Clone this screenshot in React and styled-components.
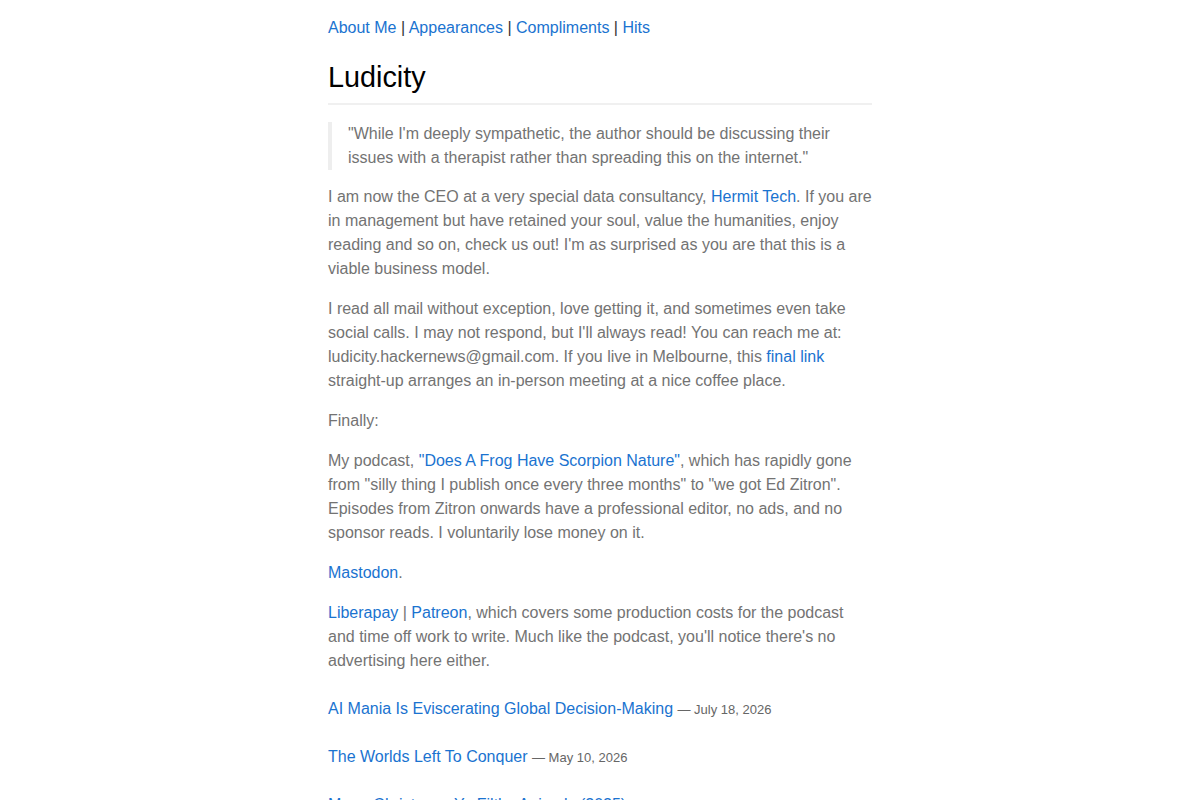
import React from "react";
import styled, { createGlobalStyle } from "styled-components";

const Global = createGlobalStyle`
  html, body { margin: 0; padding: 0; background: #fff; }
  body {
    font-family: "Liberation Sans", Arial, sans-serif;
    font-size: 16px;
    line-height: 24px;
    color: #737373;
  }
`;

const Page = styled.main`
  width: 544px;
  margin: 0 auto;
  padding-top: 16px;
`;

const Link = styled.a`
  color: #1a73d0;
  text-decoration: none;
`;

const Nav = styled.nav`
  color: #333;
  line-height: 24px;
`;

const Sep = styled.span`
  color: #333;
`;

const Title = styled.h1`
  margin: 19px 0 0;
  padding-bottom: 8px;
  font-size: 28.8px;
  line-height: 36px;
  font-weight: 400;
  color: #000;
  border-bottom: 2px solid #f0f0f0;
`;

const Quote = styled.blockquote`
  margin: 17px 0 15px;
  padding: 0 0 0 16px;
  border-left: 4px solid #eee;
  color: #737373;
`;

const Para = styled.p`
  margin: 0 0 16px;
`;

const Posts = styled.ul`
  list-style: none;
  margin: 24px 0 0;
  padding: 0;
`;

const Post = styled.li`
  margin-bottom: 24px;
  height: 24px;
`;

const PostDate = styled.span`
  font-size: 13px;
  line-height: 1;
  color: #666;
`;

const posts = [
  { title: "AI Mania Is Eviscerating Global Decision-Making", date: "July 18, 2026" },
  { title: "The Worlds Left To Conquer", date: "May 10, 2026" },
  { title: "Merry Christmas, Ya Filthy Animals (2025)", date: "December 24, 2025" },
];

export default function App() {
  return (
    <>
      <Global />
      <Page>
        <Nav>
          <Link href="#">About Me</Link> <Sep>|</Sep> <Link href="#">Appearances</Link>{" "}
          <Sep>|</Sep> <Link href="#">Compliments</Link> <Sep>|</Sep> <Link href="#">Hits</Link>
        </Nav>
        <Title>Ludicity</Title>
        <Quote>
          "While I'm deeply sympathetic, the author should be discussing their issues with a
          therapist rather than spreading this on the internet."
        </Quote>
        <Para>
          I am now the CEO at a very special data consultancy, <Link href="#">Hermit Tech</Link>.
          If you are in management but have retained your soul, value the humanities, enjoy
          reading and so on, check us out! I'm as surprised as you are that this is a viable
          business model.
        </Para>
        <Para>
          I read all mail without exception, love getting it, and sometimes even take social
          calls. I may not respond, but I'll always read! You can reach me at:
          ludicity.hackernews@gmail.com. If you live in Melbourne, this{" "}
          <Link href="#">final link</Link> straight-up arranges an in-person meeting at a nice
          coffee place.
        </Para>
        <Para>Finally:</Para>
        <Para>
          My podcast, <Link href="#">"Does A Frog Have Scorpion Nature"</Link>, which has rapidly
          gone from "silly thing I publish once every three months" to "we got Ed Zitron".
          Episodes from Zitron onwards have a professional editor, no ads, and no sponsor reads. I
          voluntarily lose money on it.
        </Para>
        <Para>
          <Link href="#">Mastodon</Link>.
        </Para>
        <Para>
          <Link href="#">Liberapay</Link> | <Link href="#">Patreon</Link>, which covers some
          production costs for the podcast and time off work to write. Much like the podcast,
          you'll notice there's no advertising here either.
        </Para>
        <Posts>
          {posts.map((p) => (
            <Post key={p.title}>
              <Link href="#">{p.title}</Link> <PostDate>— {p.date}</PostDate>
            </Post>
          ))}
        </Posts>
      </Page>
    </>
  );
}
